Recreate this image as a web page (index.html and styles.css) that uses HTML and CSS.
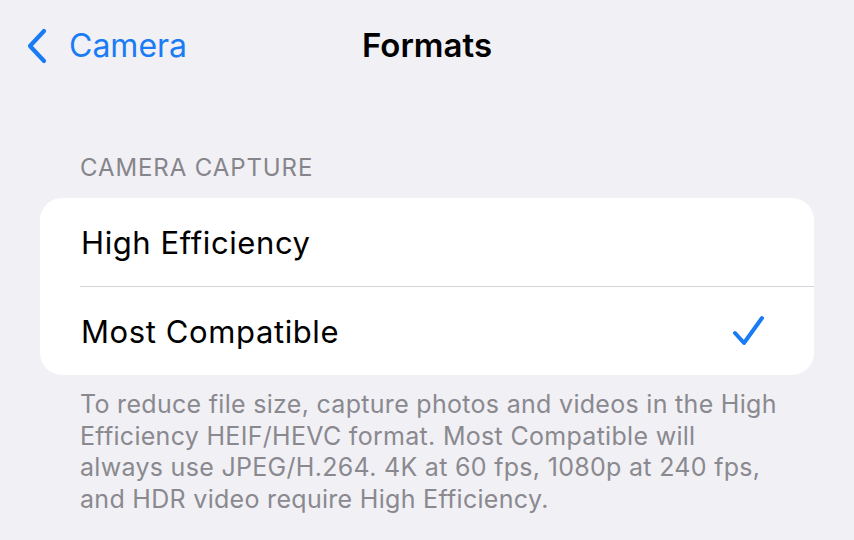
FILE: index.html
```
<!DOCTYPE html>
<html>
<head>
<meta charset="utf-8">
<link rel="stylesheet" href="styles.css">
</head>
<body>
<div class="screen">
  <header class="nav">
    <div class="back">
      <svg class="chev" width="22" height="36" viewBox="0 0 22 36"><path d="M18 3 L4 18 L18 33" fill="none" stroke="#1a7cf5" stroke-width="4.2" stroke-linecap="round" stroke-linejoin="round"/></svg>
      <span class="back-label">Camera</span>
    </div>
    <h1 class="title">Formats</h1>
  </header>
  <section class="group">
    <div class="group-header">CAMERA CAPTURE</div>
    <div class="card">
      <div class="row"><span class="row-label">High Efficiency</span></div>
      <div class="sep"></div>
      <div class="row"><span class="row-label">Most Compatible</span>
        <svg class="check" width="34" height="32" viewBox="0 0 34 32"><path d="M3 18 L12 28 L30 3" fill="none" stroke="#1a7cf5" stroke-width="4" stroke-linecap="round" stroke-linejoin="round"/></svg>
      </div>
    </div>
    <p class="footer">To reduce file size, capture photos and videos in the High<br>Efficiency HEIF/HEVC format. Most Compatible will<br>always use JPEG/H.264. 4K at 60 fps, 1080p at 240 fps,<br>and HDR video require High Efficiency.</p>
  </section>
</div>
</body>
</html>
```
FILE: styles.css
```
* { box-sizing: border-box; }
html, body { margin: 0; padding: 0; }
body {
  background: #f1f0f5;
  font-family: "Inter", "Noto Sans", sans-serif;
  width: 854px;
  height: 540px;
  overflow: hidden;
}
.screen { padding: 0; }
.nav {
  position: relative;
  height: 90px;
  display: flex;
  align-items: center;
  justify-content: center;
}
.back {
  position: absolute;
  left: 26px;
  top: 26px;
  display: flex;
  align-items: center;
  gap: 21px;
}
.back-label {
  color: #1a7cf5;
  font-size: 32px;
  letter-spacing: 0px;
}
.title {
  margin: 0;
  margin-top: -1px;
  font-size: 33px;
  font-weight: 600;
  color: #000;
  letter-spacing: 0px;
}
.group { padding: 0 40px; }
.group-header {
  padding-left: 40px;
  margin-top: 64px;
  font-size: 24px;
  color: #86858b;
  letter-spacing: 0.9px;
  line-height: 28px;
}
.card {
  margin-top: 16px;
  background: #fff;
  border-radius: 22px;
  overflow: hidden;
}
.row {
  height: 88px;
  display: flex;
  align-items: center;
  justify-content: space-between;
  padding: 0 48px 0 41px;
}
.row-label {
  font-size: 31px;
  color: #000;
  letter-spacing: 0.6px;
}
.sep {
  height: 1px;
  background: #d6d6da;
  margin-left: 40px;
}
.footer {
  margin: 14px 0 0;
  padding: 0 40px;
  font-size: 25px;
  line-height: 31.6px;
  color: #8a898f;
  letter-spacing: 0.3px;
  white-space: nowrap;
}
```
